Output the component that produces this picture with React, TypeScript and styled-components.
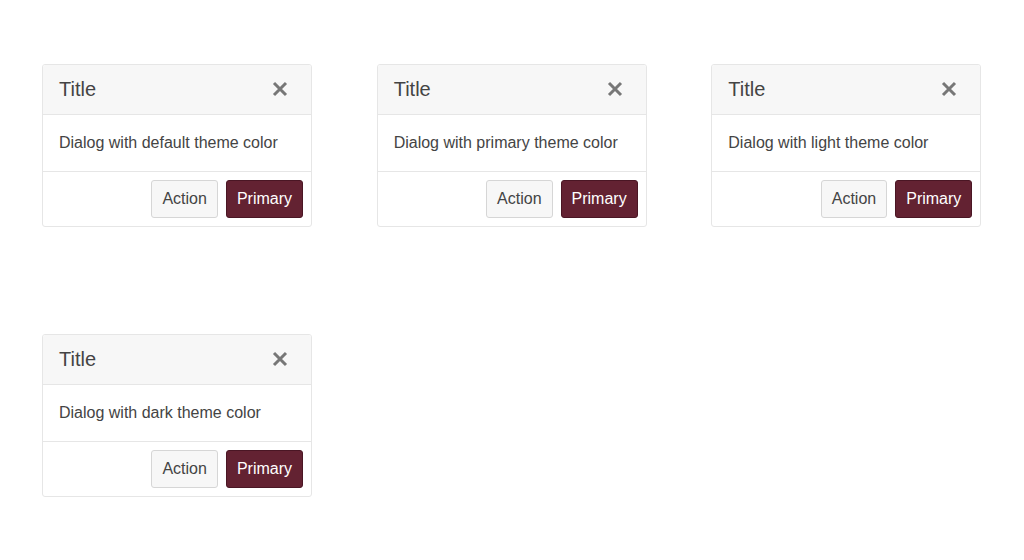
import React from "react";
import styled, { createGlobalStyle } from "styled-components";

const Global = createGlobalStyle`
  html, body { margin: 0; padding: 0; background: #fff; }
  body { font-family: "Liberation Sans", Arial, sans-serif; color: #444; }
`;

const Page = styled.div`
  display: grid;
  grid-template-columns: repeat(3, 270px);
  column-gap: 64.67px;
  row-gap: 107px;
  padding: 64px 0 0 42px;
  align-items: start;
`;

const Card = styled.div`
  border: 1px solid #e6e6e6;
  border-radius: 3px;
  background: #fff;
  overflow: hidden;
`;

const Header = styled.div`
  display: flex;
  align-items: center;
  justify-content: space-between;
  height: 47px;
  padding: 0 22px 2px 16px;
  background: #f7f7f7;
  border-bottom: 1px solid #e6e6e6;
`;

const Title = styled.div`
  font-size: 20px;
  line-height: 24px;
  color: #444;
`;

const Close = styled.button`
  display: flex;
  align-items: center;
  justify-content: center;
  border: 0;
  background: transparent;
  padding: 0;
  width: 18px;
  height: 18px;
  color: #777;
  cursor: pointer;
`;

const Body = styled.div`
  padding: 16px;
  font-size: 16px;
  line-height: 24px;
  color: #444;
  border-bottom: 1px solid #e6e6e6;
`;

const Footer = styled.div`
  display: flex;
  justify-content: flex-end;
  gap: 8px;
  padding: 8px;
`;

const Button = styled.button<{ $primary?: boolean }>`
  font-family: "Liberation Sans", Arial, sans-serif;
  font-size: 16px;
  line-height: 24px;
  padding: 6px 10px;
  border-radius: 3px;
  border: 1px solid ${(p) => (p.$primary ? "#4a1624" : "#d6d6d6")};
  background: ${(p) => (p.$primary ? "#632232" : "#f7f7f7")};
  color: ${(p) => (p.$primary ? "#fff" : "#444")};
  cursor: pointer;
`;

const XIcon = () => (
  <svg width="16" height="16" viewBox="0 0 16 16">
    <path d="M2 2 L14 14 M14 2 L2 14" stroke="currentColor" strokeWidth="3" strokeLinecap="butt" />
  </svg>
);

const themes = ["default", "primary", "light", "dark"];

export default function App() {
  return (
    <>
      <Global />
      <Page>
        {themes.map((t) => (
          <Card key={t}>
            <Header>
              <Title>Title</Title>
              <Close aria-label="Close">
                <XIcon />
              </Close>
            </Header>
            <Body>Dialog with {t} theme color</Body>
            <Footer>
              <Button>Action</Button>
              <Button $primary>Primary</Button>
            </Footer>
          </Card>
        ))}
      </Page>
    </>
  );
}
